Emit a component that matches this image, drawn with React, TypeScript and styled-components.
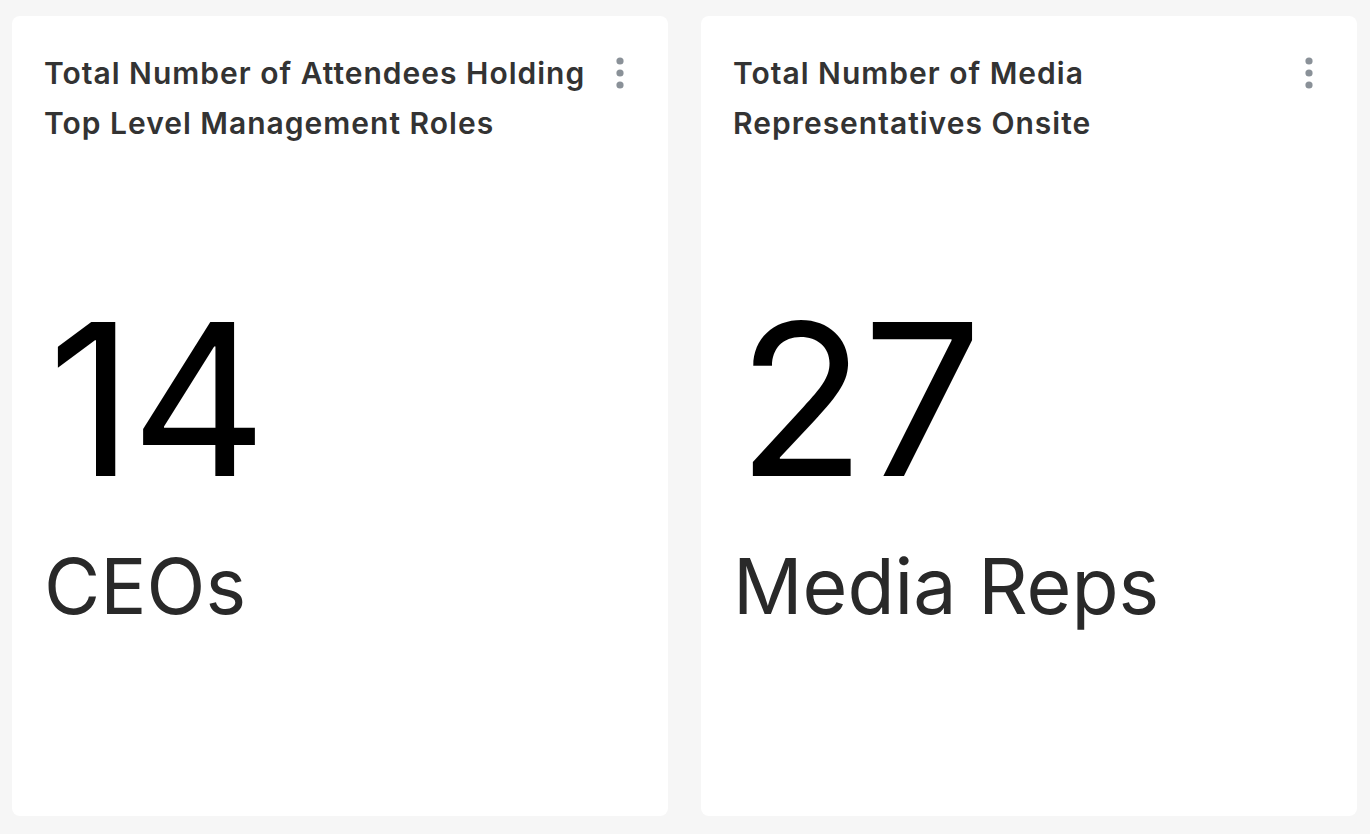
import React from "react";
import styled, { createGlobalStyle } from "styled-components";

const Global = createGlobalStyle`
  html, body { margin: 0; padding: 0; background: #f6f6f6; }
  body { font-family: Inter, "Noto Sans", sans-serif; }
`;

const Page = styled.div`
  display: grid;
  grid-template-columns: 656px 656px;
  column-gap: 33px;
  padding: 16px 12px 18px 12px;
  box-sizing: border-box;
  height: 834px;
`;

const Card = styled.section`
  background: #ffffff;
  border-radius: 8px;
  padding: 32px 32px 0 32px;
  box-sizing: border-box;
  display: flex;
  flex-direction: column;
`;

const Header = styled.div`
  display: flex;
  align-items: flex-start;
  justify-content: space-between;
  gap: 8px;
`;

const Title = styled.h2`
  margin: 0;
  font-family: Inter, sans-serif;
  font-weight: 600;
  font-size: 30px;
  line-height: 50px;
  letter-spacing: 1px;
  color: #333333;
  max-width: 560px;
`;

const MenuButton = styled.button`
  flex: none;
  border: 0;
  background: transparent;
  padding: 0;
  margin: 8px 4px 0 0;
  width: 24px;
  height: 34px;
  display: flex;
  align-items: center;
  justify-content: center;
  cursor: pointer;
`;

const Value = styled.div`
  margin: 146px 0 0 4px;
  font-family: Inter, sans-serif;
  font-weight: 400;
  font-size: 211px;
  line-height: 212px;
  letter-spacing: -3px;
  color: #000000;
`;

const Label = styled.div`
  margin-top: 42px;
  font-family: Inter, sans-serif;
  font-weight: 400;
  font-size: 77px;
  line-height: 77px;
  color: #292929;
`;

const Kebab = () => (
  <svg width="8" height="32" viewBox="0 0 8 32">
    <circle cx="4" cy="4" r="3.6" fill="#8a9198" />
    <circle cx="4" cy="16" r="3.6" fill="#8a9198" />
    <circle cx="4" cy="28" r="3.6" fill="#8a9198" />
  </svg>
);

const stats = [
  {
    title: "Total Number of Attendees Holding Top Level Management Roles",
    value: "14",
    label: "CEOs",
  },
  {
    title: "Total Number of Media Representatives Onsite",
    value: "27",
    label: "Media Reps",
  },
];

export default function App() {
  return (
    <>
      <Global />
      <Page>
        {stats.map((s) => (
          <Card key={s.value}>
            <Header>
              <Title>{s.title}</Title>
              <MenuButton aria-label="More options">
                <Kebab />
              </MenuButton>
            </Header>
            <Value>{s.value}</Value>
            <Label>{s.label}</Label>
          </Card>
        ))}
      </Page>
    </>
  );
}
